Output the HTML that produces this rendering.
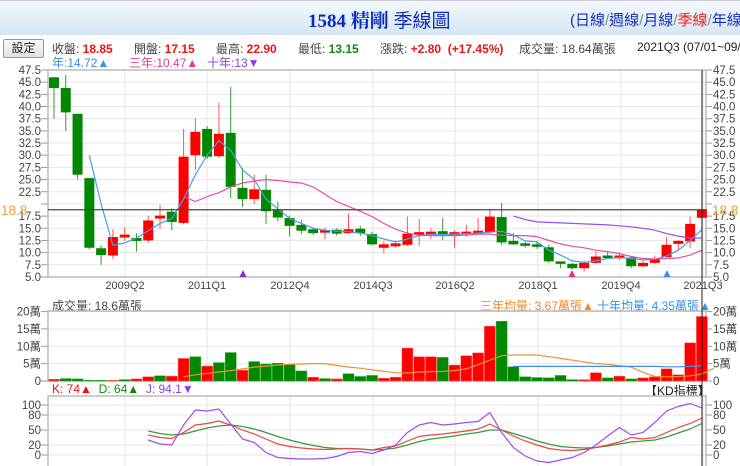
<!DOCTYPE html>
<html><head><meta charset="utf-8"><style>
body{margin:0;width:740px;height:466px;overflow:hidden;background:#fff;font-family:"Liberation Sans","Noto Sans CJK TC",sans-serif;}
#hdr{position:absolute;left:0;top:0;width:740px;height:34px;background:linear-gradient(#f4f8fc,#d6e6f5);border-top:1px solid #ccd;}
.t{position:absolute;white-space:nowrap;font-size:12px;}
svg{position:absolute;left:0;top:0}
</style></head><body>
<div id="hdr"></div>
<div class="t" style="left:308px;top:6px;font-size:19px;color:#0d2bbd;font-family:'Liberation Serif','Noto Serif CJK SC',serif;font-weight:bold">1584 精剛 <span style="font-family:'Liberation Sans','Noto Sans CJK TC',sans-serif;font-weight:normal">季線圖</span></div>
<div class="t" style="left:570px;top:9px;font-size:15px;color:#1530c0">(日線<span style="color:#888">/</span>週線<span style="color:#888">/</span>月線<span style="color:#888">/</span><span style="color:#e22">季線</span><span style="color:#888">/</span>年線</div>
<div class="t" style="left:3px;top:39px;width:39px;height:17px;border:1px solid #999;border-radius:2px;background:linear-gradient(#fafafa,#e2e2e2);text-align:center;line-height:17px;color:#222">設定</div>
<div class="t" style="left:52px;top:40px;color:#444">收盤: <b style="color:#e11">18.85</b></div>
<div class="t" style="left:134px;top:40px;color:#444">開盤: <b style="color:#e11">17.15</b></div>
<div class="t" style="left:216px;top:40px;color:#444">最高: <b style="color:#e11">22.90</b></div>
<div class="t" style="left:298px;top:40px;color:#444">最低: <b style="color:#181">13.15</b></div>
<div class="t" style="left:380px;top:40px;color:#444">漲跌: <b style="color:#e11">+2.80 &nbsp;(+17.45%)</b></div>
<div class="t" style="left:519px;top:40px;color:#444">成交量: 18.64萬張</div>
<div class="t" style="left:637px;top:40px;color:#222">2021Q3 (07/01~09/1</div>
<div class="t" style="left:52px;top:54px;color:#3a8ee6">年:14.72▲</div>
<div class="t" style="left:129px;top:54px;color:#e0428a">三年:10.47▲</div>
<div class="t" style="left:207px;top:54px;color:#8a3ee6">十年:13▼</div>
<div class="t" style="left:52px;top:297px;color:#444">成交量: 18.6萬張</div>
<div class="t" style="left:480px;top:297px;color:#f08a2a">三年均量: 3.67萬張▲</div>
<div class="t" style="left:597px;top:297px;color:#3a8ee6">十年均量: 4.35萬張▲</div>
<div class="t" style="left:52px;top:382px;color:#e11">K: 74▲ <span style="color:#181">&nbsp;D: 64▲</span> <span style="color:#8a3ee6">&nbsp;J: 94.1▼</span></div>
<div class="t" style="left:645px;top:382px;color:#222">【KD指標】</div>
<svg id="s" width="740" height="466" xmlns="http://www.w3.org/2000/svg"></svg>
<script>
var S=document.getElementById('s'),h='';
function X(i){return 54+11.78*i}
function PY(v){return 70+(47.5-v)*4.87}
function VY(v){return 381-v*3.47}
function KY(v){return 455-v*0.5}
var L=48,R=706;
for(var v=5;v<=47.5;v+=2.5){var y=PY(v);h+='<line x1="'+L+'" x2="'+R+'" y1="'+y+'" y2="'+y+'" stroke="#e6e6e6"/>';
h+='<line x1="41" x2="48" y1="'+y+'" y2="'+y+'" stroke="#999"/><line x1="706" x2="712" y1="'+y+'" y2="'+y+'" stroke="#999"/>';
if(Math.abs(v-20)>0.1){h+='<text x="41" y="'+(y+4)+'" font-size="11.5" text-anchor="end" fill="#444">'+v.toFixed(1)+'</text>';
h+='<text x="713" y="'+(y+4)+'" font-size="11.5" fill="#444">'+v.toFixed(1)+'</text>';}}
var xl=[[125,'2009Q2'],[207,'2011Q1'],[290,'2012Q4'],[373,'2014Q3'],[455,'2016Q2'],[538,'2018Q1'],[621,'2019Q4'],[703,'2021Q3']];
xl.forEach(function(a){h+='<line x1="'+a[0]+'" x2="'+a[0]+'" y1="70" y2="277" stroke="#e6e6e6"/><line x1="'+a[0]+'" x2="'+a[0]+'" y1="311" y2="381" stroke="#e6e6e6"/><line x1="'+a[0]+'" x2="'+a[0]+'" y1="396" y2="466" stroke="#e6e6e6"/>';
h+='<text x="'+a[0]+'" y="289" font-size="11" text-anchor="middle" fill="#444">'+a[1]+'</text>';});
h+='<rect x="48" y="70" width="658" height="207" fill="none" stroke="#bbb" stroke-width="1.5"/>';
var C=[[46,43.8,46,37.5],[43.8,38.8,46.5,35],[38.5,26,38.5,25],[25.3,11,25.3,10.7],[10.9,9.5,11.5,7.5],[9.4,13.2,14.8,8.7],[13.1,13.7,15.2,12.4],[13,12.4,14,10.2],[12.5,16.6,17.6,12],[17,17.6,19.8,14.8],[18.4,16.3,19.1,14.6],[16.1,29.7,35.4,15.8],[30,34.8,37.6,27],[35.4,29.7,36,29.2],[29.8,34.4,40.8,29.5],[34.6,23.5,44,21.2],[23.3,21,27.4,19.4],[21,23,26,20],[22.9,18.5,26,15.9],[18.8,17.2,20.5,16.4],[17.1,15.5,17.6,13.3],[15.7,14.5,16.8,13.8],[14.8,14,15.2,13.6],[14.1,14.6,15.2,12.7],[14.5,14.1,15,13.5],[14,14.8,18,13.8],[14.9,14,15.5,13.4],[13.8,11.7,14.3,11.5],[11.2,11.5,12.4,9.9],[11.5,11.7,12.5,11],[11.6,13.9,17.4,11.4],[13.8,14,16.9,11.4],[13.9,14.1,15,12.8],[14.4,13.7,17.2,12.5],[13.8,14,14.6,11],[14,14.1,15.7,13.3],[14.1,14.3,17.1,13.8],[14.2,17.4,18.8,14],[17.3,12.1,20.2,11.6],[12.2,11.9,14,11.6],[11.7,11.6,12.2,11],[11.5,11.4,12.4,10.8],[11.1,8.2,11.6,7.9],[8,7.9,8,6.8],[7.7,6.8,7.9,6.6],[6.8,7.9,8.4,6.2],[7.9,9.2,10.2,7.6],[9.2,9.1,10.2,8.8],[9,9.2,10,8.5],[9,7.2,9.3,6.8],[7.2,7.9,8.3,6.9],[7.9,8.8,9.4,7.6],[9.1,11.6,13.2,8.8],[12,12.2,12.6,10.5],[12.3,15.9,17.4,11],[17.15,18.85,22.9,13.15]];
C.forEach(function(c,i){var x=X(i),up=c[1]>=c[0],col=up?'#f00':'#080',wc=up?'#f55':'#393';
h+='<line x1="'+x+'" x2="'+x+'" y1="'+PY(c[2])+'" y2="'+PY(c[3])+'" stroke="'+wc+'"/>';
var t=PY(Math.max(c[0],c[1])),b=PY(Math.min(c[0],c[1]));if(b-t<2){t-=1;b+=1;}
h+='<rect x="'+(x-5)+'" y="'+t+'" width="10" height="'+(b-t)+'" fill="'+col+'"/>';});
function line(st,arr,f,col,w){var p=arr.map(function(v,j){return X(st+j).toFixed(1)+','+f(v).toFixed(1)}).join(' ');h+='<polyline points="'+p+'" fill="none" stroke="'+col+'" stroke-width="'+(w||1.2)+'"/>';}
line(3,[30,20,11.5,12,13,14.5,16,17,21,26,30,33,31,27,25,21,19,17,16,15,14.6,14.4,14.3,14,13.5,12.8,12.2,12.8,13.5,13.8,13.7,13.8,13.9,14,14.2,14.4,13.6,12.4,12.2,10.5,9.5,8.3,8,8.3,8.8,9,8.8,8.5,8.6,9.3,10.5,12.5,14.7],PY,'#4a9de8');
line(11,[21.5,20.5,21.5,22.3,23.5,24.3,24.7,25,24.8,24.5,24.3,23.5,22,20.5,19.5,18.5,17.4,16,14.8,14,13.6,13.5,13.5,13.5,13.6,13.8,13.8,13.6,13.5,13.5,13.3,12.5,11.8,11.3,11,10.5,10.2,9.8,9.2,8.8,8.7,8.8,8.9,9.5,10.5],PY,'#e8509a');
line(39,[17.5,16.8,16.3,16.2,16.1,16,15.9,15.8,15.7,15.5,15.3,15,14.6,13.9,13.4,13,13],PY,'#9a4ef0');
var y18=PY(18.8);h+='<line x1="48" x2="706" y1="'+y18+'" y2="'+y18+'" stroke="#444" stroke-width="1.2"/>';
h+='<text x="1" y="'+(y18+5)+'" font-size="13.5" fill="#f0a040">18.8</text><text x="712" y="'+(y18+5)+'" font-size="13.5" fill="#f0a040">18.8</text>';
function tri(x,y,c){h+='<polygon points="'+(x-3.5)+','+y+' '+(x+3.5)+','+y+' '+x+','+(y-7)+'" fill="'+c+'"/>';}
tri(243,277,'#8a2be2');tri(572,277,'#e8307a');tri(667,277,'#3a8ee6');
for(var k=0;k<=20;k+=5){var y=VY(k);h+='<line x1="48" x2="706" y1="'+y+'" y2="'+y+'" stroke="#e6e6e6"/><line x1="41" x2="48" y1="'+y+'" y2="'+y+'" stroke="#999"/><line x1="706" x2="712" y1="'+y+'" y2="'+y+'" stroke="#999"/>';
var lb=k?k+'萬':'0';h+='<text x="41" y="'+(y+4)+'" font-size="11.5" text-anchor="end" fill="#444">'+lb+'</text><text x="713" y="'+(y+4)+'" font-size="11.5" fill="#444">'+lb+'</text>';}
h+='<rect x="48" y="311" width="658" height="70" fill="none" stroke="#bbb" stroke-width="1.5"/>';
var V=[0.5,0.7,0.6,0.2,0.2,0.2,0.4,0.6,1.2,1.5,1.4,6.5,7,4.3,5.3,8.2,3.1,5.6,4.9,5.1,4.8,2.9,1.1,0.7,0.6,2.1,1.3,1.6,0.8,1.1,9.5,7,7,6.8,4.6,7.3,8.1,15.8,17.2,4.1,1.2,1,0.9,1.6,0.4,0.4,2.4,0.9,1.4,0.6,0.9,1.2,3.5,1.8,11,18.6];
var VC='rggggrgrrgrrgrggrgggggrgrggrrrrgrrrggggggrrgrgrrrrr';
V.forEach(function(v,i){var up=(i<VC.length?VC[i]:'r')=='r';if(i>=27)up=C[i][1]>=C[i][0];if(i==33||i==38)up=false;
h+='<rect x="'+(X(i)-5.5)+'" y="'+VY(v)+'" width="11" height="'+(v*3.47)+'" fill="'+(up?'#f00':'#080')+'" stroke="'+(up?'#f66':'#3a3')+'" stroke-width="0.5"/>';});
line(11,[1.2,1.8,2.2,2.6,3,3.5,4,4.3,4.6,4.8,4.9,5,5,4.5,4,3.7,3.2,2.8,2.4,2.3,2.6,2.7,2.8,3,3.5,4.7,6,7.3,7.5,7.5,7.5,7,6.5,6,5.5,5,4.8,4.4,4,2.5,1.3,1.2,1.3,1.5,2,3.7],VY,'#f09030');
line(39,[4.2,4.2,4.2,4.2,4.2,4.2,4.2,4.2,4.2,4.2,4.2,4.2,4.2,4.1,4.1,4.2,4.35],VY,'#3a8ee6');
[0,20,50,80,100].forEach(function(k){var y=KY(k);h+='<line x1="48" x2="706" y1="'+y+'" y2="'+y+'" stroke="#e6e6e6"/><line x1="41" x2="48" y1="'+y+'" y2="'+y+'" stroke="#999"/><line x1="706" x2="712" y1="'+y+'" y2="'+y+'" stroke="#999"/><text x="41" y="'+(y+4)+'" font-size="11.5" text-anchor="end" fill="#444">'+k+'</text><text x="713" y="'+(y+4)+'" font-size="11.5" fill="#444">'+k+'</text>';});
h+='<rect x="48" y="396" width="658" height="72" fill="none" stroke="#bbb" stroke-width="1.5"/>';
line(8,[48,43,40,42,48,54,58,60,57,52,45,37,30,24,19,15,13,13,12,10,11,14,20,27,32,35,38,42,45,50,50,43,36,28,22,17,15,14,15,18,22,26,28,30,36,44,52,63],KY,'#3a9a3a');
line(8,[40,35,33,45,60,63,68,60,50,42,32,22,17,14,12,11,12,13,12,10,15,18,28,37,40,42,45,48,52,62,50,38,28,20,13,10,9,11,15,20,26,35,32,35,45,55,63,74],KY,'#ee4444');
line(8,[30,22,20,60,90,88,92,62,32,25,5,-5,-7,-8,-8,-7,-3,5,7,3,10,20,45,60,65,60,62,65,67,85,45,15,-2,-12,-15,-10,-5,5,20,38,55,40,45,65,88,97,103,94],KY,'#9a4ef0');
h+='<line x1="702" x2="702" y1="70" y2="466" stroke="#222"/>';
S.innerHTML=h;
</script>
</body></html>
